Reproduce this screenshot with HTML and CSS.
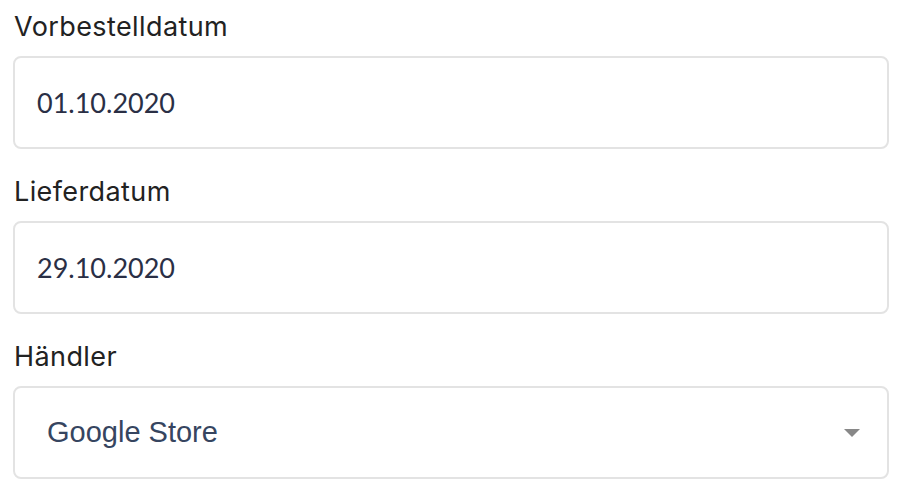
FILE: index.html
```html
<!DOCTYPE html>
<html lang="de">
<head>
    <meta charset="UTF-8">
    <meta name="viewport" content="width=device-width, initial-scale=1.0">
    <title>Bestellung</title>
    <link rel="stylesheet" href="styles.css">
</head>
<body>
    <div class="form">
        <div class="field">
            <label class="label">Vorbestelldatum</label>
            <div class="input">01.10.2020</div>
        </div>

        <div class="field">
            <label class="label">Lieferdatum</label>
            <div class="input">29.10.2020</div>
        </div>

        <div class="field">
            <label class="label">Händler</label>
            <div class="input select">
                <span class="select-value">Google Store</span>
                <span class="caret"></span>
            </div>
        </div>
    </div>
</body>
</html>
```

FILE: styles.css
```css
body {
    margin: 0;
    background: #fff;
    font-family: Lato, "Open Sans", sans-serif;
}

.form {
    padding: 10px 24px 0 13px;
    display: flex;
    flex-direction: column;
    gap: 26px;
}

.field {
    display: flex;
    flex-direction: column;
    gap: 13px;
}

.label {
    font-family: Inter, Lato, sans-serif;
    font-size: 27px;
    line-height: 33px;
    letter-spacing: 0.4px;
    color: #222;
    padding-left: 1px;
}

.input {
    height: 89px;
    border: 2px solid #e3e3e3;
    border-radius: 8px;
    display: flex;
    align-items: center;
    padding: 0 22px;
    font-size: 27px;
    color: #2a2f45;
}

.select {
    justify-content: space-between;
    padding: 0 27px 0 32px;
}

.select-value {
    font-family: "Liberation Sans", Arial, sans-serif;
    font-size: 29px;
    color: #364560;
}

.caret {
    width: 0;
    height: 0;
    border-left: 8px solid transparent;
    border-right: 8px solid transparent;
    border-top: 8px solid #888;
}
```
